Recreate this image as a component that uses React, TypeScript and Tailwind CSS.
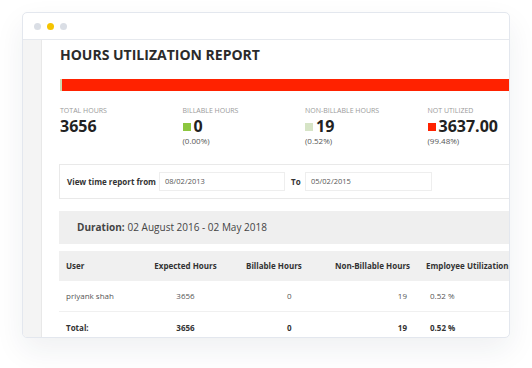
import React from "react";

const font = { fontFamily: '"Open Sans", "Liberation Sans", sans-serif' };

function Stat({
    label,
    value,
    pct,
    swatch,
}: {
    label: string;
    value: string;
    pct?: string;
    swatch?: string;
}) {
    return (
        <div className="w-[122.5px] shrink-0">
            <div className="text-[7px] leading-[10px] text-[#9a9a9a] uppercase">{label}</div>
            <div className="mt-[1px] h-[18px] flex items-center gap-[3px]">
                {swatch && <span className={`block w-[8px] h-[8px] mt-[1px] ${swatch}`} />}
                <span className="text-[16px] leading-[18px] font-bold text-[#222]">{value}</span>
            </div>
            <div className="mt-[1px] h-[10px] text-[8px] leading-[10px] text-[#555]">{pct}</div>
        </div>
    );
}

function Row({
    cells,
    className,
    bold,
    header,
}: {
    cells: string[];
    className?: string;
    bold?: boolean;
    header?: boolean;
}) {
    const w = bold ? "font-bold text-[#333]" : "text-[#555]";
    return (
        <div className={`flex items-center text-[8px] whitespace-nowrap ${w} ${className ?? ""}`}>
            <div className="w-[81px] shrink-0 pl-[7px]">{cells[0]}</div>
            <div className="w-[94px] shrink-0 text-center pr-[3px]">{cells[1]}</div>
            <div className={`w-[96px] shrink-0 ${header ? "pl-[12px]" : "pl-[53px]"}`}>{cells[2]}</div>
            <div className={`w-[84px] shrink-0 text-right ${header ? "pr-[4px]" : "pr-[7px]"}`}>{cells[3]}</div>
            <div className={`w-[100px] shrink-0 ${header ? "pl-[12px]" : "pl-[16px]"}`}>{cells[4]}</div>
        </div>
    );
}

export default function App() {
    return (
        <div className="w-[532px] h-[368px] bg-white overflow-hidden" style={font}>
            <div className="ml-[22px] mt-[12px] w-[488px] h-[326px] rounded-[5px] border border-[#e3e7ee] bg-white overflow-hidden flex flex-col shadow-[0_12px_30px_rgba(30,40,70,0.07)]">
                <div className="h-[27px] shrink-0 border-b border-[#e6e9ee] flex items-center gap-[6px] pl-[11px]">
                    <span className="w-[7px] h-[7px] rounded-full bg-[#dadee5]" />
                    <span className="w-[7px] h-[7px] rounded-full bg-[#f5c400]" />
                    <span className="w-[7px] h-[7px] rounded-full bg-[#dadee5]" />
                </div>
                <div className="flex flex-1 min-h-0">
                    <div className="w-[19px] shrink-0 bg-[#f4f4f4] border-r border-[#e8e8e8]" />
                    <div className="flex-1 min-w-0 pl-[17px] pt-[5px] overflow-hidden">
                        <h1 className="text-[14px] leading-[19px] font-bold text-[#2b2b2b] pl-[1px]">
                            HOURS UTILIZATION REPORT
                        </h1>
                        <div className="mt-[15px] ml-[1px] h-[12px] flex">
                            <div className="w-[2px] bg-[#c9dcb2]" />
                            <div className="flex-1 bg-[#ff2200]" />
                        </div>
                        <div className="mt-[15px] flex pl-[1px]">
                            <Stat label="Total Hours" value="3656" />
                            <Stat label="Billable Hours" value="0" pct="(0.00%)" swatch="bg-[#8cc63f]" />
                            <Stat label="Non-Billable Hours" value="19" pct="(0.52%)" swatch="bg-[#d6e4c6]" />
                            <Stat label="Not Utilized" value="3637.00" pct="(99.48%)" swatch="bg-[#ff2200]" />
                        </div>
                        <div className="mt-[18px] h-[35px] border border-[#e9e9e9] border-r-0 flex items-center pl-[7px] text-[8px]">
                            <span className="font-bold text-[#333] w-[92px] shrink-0">View time report from</span>
                            <div className="w-[126px] h-[19px] border border-[#eee] flex items-center pl-[5px] text-[#555] text-[7.5px]">
                                08/02/2013
                            </div>
                            <span className="font-bold text-[#333] ml-[6px] w-[14px]">To</span>
                            <div className="w-[127px] h-[19px] border border-[#eee] flex items-center pl-[5px] text-[#555] text-[7.5px]">
                                05/02/2015
                            </div>
                        </div>
                        <div className="mt-[12px] h-[33px] bg-[#efefef] flex items-center pl-[18px] text-[10px] text-[#444]">
                            <span className="font-bold">Duration:</span>
                            <span className="ml-[3px]">02 August 2016 - 02 May 2018</span>
                        </div>
                        <div className="mt-[7px]">
                            <Row
                                className="h-[30px] bg-[#f0f0f0]"
                                bold
                                header
                                cells={["User", "Expected Hours", "Billable Hours", "Non-Billable Hours", "Employee Utilization"]}
                            />
                            <Row
                                className="h-[31px] border-b border-[#f0f0f0]"
                                cells={["priyank shah", "3656", "0", "19", "0.52 %"]}
                            />
                            <Row className="h-[32px]" bold cells={["Total:", "3656", "0", "19", "0.52 %"]} />
                        </div>
                    </div>
                </div>
            </div>
        </div>
    );
}
